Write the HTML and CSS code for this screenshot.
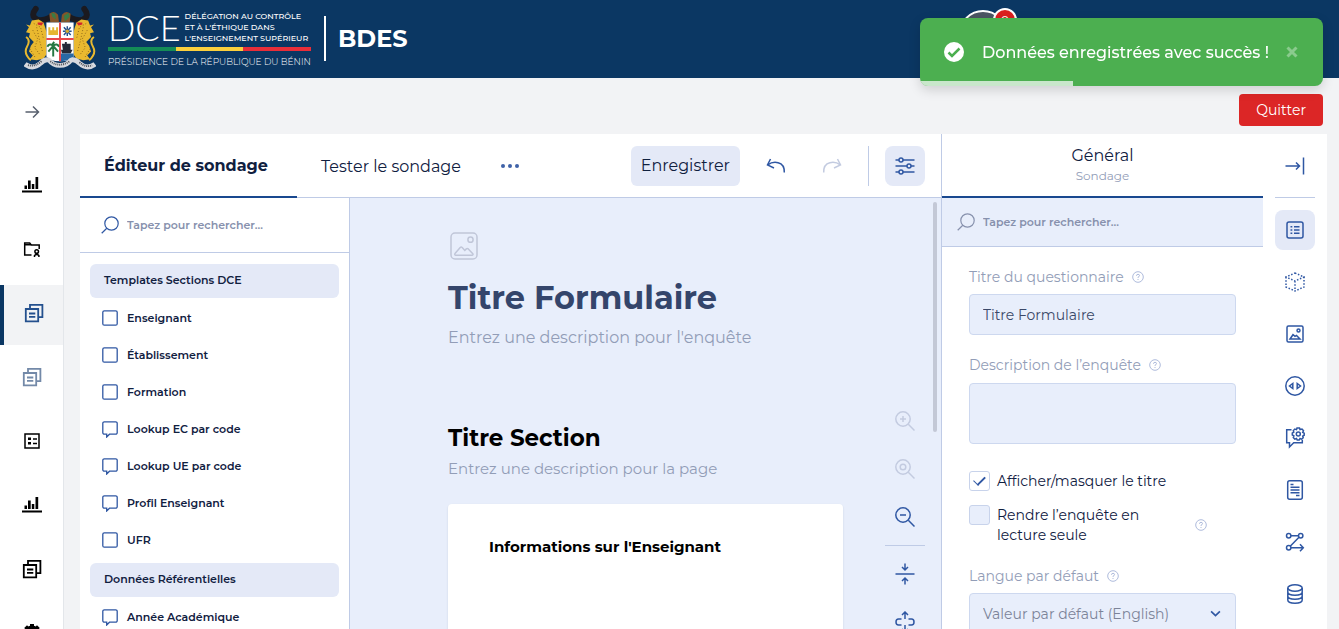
FILE: index.html
```
<!DOCTYPE html>
<html lang="fr">
<head>
<meta charset="UTF-8">
<meta name="viewport" content="width=device-width, initial-scale=1">
<title>BDES - Éditeur de sondage</title>
<link rel="stylesheet" href="styles.css">
</head>
<body>

<!-- Icons -->
<svg class="sprite" aria-hidden="true">
  <symbol id="i-search" viewBox="0 0 18 18"><circle cx="10.500" cy="7.500" r="6.700"/><path d="M5.800 12.300L.7 17.300"/></symbol>
  <symbol id="i-box" viewBox="0 0 16 17"><rect x=".8" y=".8" width="14.400" height="14.400" rx="1.500"/></symbol>
  <symbol id="i-bubble" viewBox="0 0 16 17"><path d="M2.300.8h11.400a1.500 1.500 0 0 1 1.500 1.500v9.400a1.500 1.500 0 0 1-1.500 1.500H7.500L4.700 16v-2.800H2.300A1.500 1.500 0 0 1 .8 11.700V2.300A1.500 1.500 0 0 1 2.300.8z"/></symbol>
  <symbol id="i-image" viewBox="0 0 28 28"><rect x="1" y="1" width="26" height="26" rx="4"/><circle cx="20.500" cy="7.700" r="2.600"/><path d="M5 21.500l5.200-6c.7-.7 1.300-.7 2 0l2.600 3 1.500-1.600c.7-.6 1.400-.6 2 0l4.500 4.800c.5.8.2 1.500-.8 1.500H5.800c-1 0-1.300-.8-.8-1.700z"/></symbol>
  <symbol id="i-image-sm" viewBox="0 0 20 20"><rect x="2" y="2" width="16" height="16" rx="1.500"/><circle cx="13.500" cy="6.500" r="1.500"/><path d="M5 15l3-4.300 2 1.700 1.500-1 3.500 3.600z"/></symbol>
  <symbol id="i-bars" viewBox="0 0 20 18"><path d="M0 14.500h20v2H0zM2.500 9.500h2.500v3.500H2.500zM6 4.500h2.700V13H6zM9.800 8h2.500v5H9.800zM13.500 1h2.700v12h-2.700z"/></symbol>
  <symbol id="i-docs" viewBox="0 0 20 20"><path d="M1.800 6h12.400v12.400H1.800z M6 5.500V1.800h12.400v12.400h-3.700 M5 10.500h6.300M5 13.900h6.300"/></symbol>
  <symbol id="i-folder" viewBox="0 0 18 18"><path d="M8.500 15H1.700V3h5l1.500 2h8v4M1.700 4.700h7"/><circle cx="13.700" cy="11.500" r="1.800"/><path d="M11.500 17v-1.500q2.200-2.200 4.400 0V17"/></symbol>
  <symbol id="i-form" viewBox="0 0 18 18"><path d="M2 2h14v14H2z"/><path d="M5 5.500h3v2.500H5zM5 10h3v2.500H5z" fill="currentColor" stroke="none"/><path d="M10 7h4M10 11.500h4"/></symbol>
  <symbol id="i-gear" viewBox="0 0 20 20"><circle cx="10" cy="10" r="5.500"/><path d="M10 1v18M1 10h18M3.600 3.600l12.800 12.800M16.400 3.600L3.600 16.400"/></symbol>
  <symbol id="i-arrow" viewBox="0 0 16 16"><path d="M1.500 8h13M9 2.500L14.500 8 9 13.500"/></symbol>
  <symbol id="i-undo" viewBox="0 0 20 16"><path d="M4.500 1L1.500 7l6.500 3M1.800 7c5-4 17-4.500 16.500 7.500"/></symbol>
  <symbol id="i-redo" viewBox="0 0 20 16"><path d="M15.500 1l3 6-6.500 3M18.200 7C13.200 3 1.200 2.500 1.700 14.500"/></symbol>
  <symbol id="i-sliders" viewBox="0 0 20 20"><path d="M.5 4h3.500M8 4h11.500M.5 10h11.500M16 10h3.500M.5 16h3.500M8 16h11.500"/><circle cx="6" cy="4" r="2"/><circle cx="14" cy="10" r="2"/><circle cx="6" cy="16" r="2"/></symbol>
  <symbol id="i-zoomin" viewBox="0 0 20 20"><circle cx="8" cy="8" r="7.200"/><path d="M13.300 13.300L19.500 19.500M8 5v6M5 8h6"/></symbol>
  <symbol id="i-zoom100" viewBox="0 0 20 20"><circle cx="8" cy="8" r="7.200"/><circle cx="8" cy="8" r="2.800"/><path d="M13.300 13.300L19.500 19.500"/></symbol>
  <symbol id="i-zoomout" viewBox="0 0 20 20"><circle cx="8" cy="8" r="7.200"/><path d="M13.300 13.300L19.500 19.500M5 8h6"/></symbol>
  <symbol id="i-collapse" viewBox="0 0 20 22"><path d="M.5 11h19M10 .5v6M7 4l3 3 3-3M10 21.500v-6M7 18l3-3 3 3"/></symbol>
  <symbol id="i-expand" viewBox="0 0 20 22"><path d="M10 8V1M7 4l3-3 3 3M10 14v7M7 18l3 3 3-3M6.500 8H3.500Q1 8 1 11t2.500 3h3M13.500 8h3Q19 8 19 11t-2.500 3h-3"/></symbol>
  <symbol id="i-tobar" viewBox="0 0 20 20"><path d="M.5 10h14M11 6.500l3.500 3.500L11 13.500M18.500 1.500v17"/></symbol>
  <symbol id="i-list" viewBox="0 0 20 20"><rect x="2" y="2" width="16" height="16" rx="2"/><path d="M5.500 6.800h1.800M9 6.800h5.500M5.500 10h1.800M9 10h5.500M5.500 13.200h1.800M9 13.200h5.500"/></symbol>
  <symbol id="i-cube" viewBox="0 0 20 20"><path d="M10 1l9 4-9 4-9-4zM1 5v10l9 4 9-4V5M10 9v10" stroke-dasharray="1.500 1.700"/></symbol>
  <symbol id="i-code" viewBox="0 0 20 20"><circle cx="10" cy="10" r="9.200"/><path d="M7.800 7.500v5L4.500 10zM12.200 7.500v5l3.300-2.500z"/></symbol>
  <symbol id="i-bubblegear" viewBox="0 0 20 22"><path d="M6.500 2.800H1.700v13h2.800V20l4.200-4.200h8.600v-3"/><circle cx="13.300" cy="7" r="2"/><path d="M12 1h2.500l.5 1.500 2-.5 1.500 1.700-.8 1.700 1.500.8v2l-1.500.8.5 1.700-1.700 1.500-1.500-.7-.8 1.500h-2l-.7-1.500-1.700.7-1.500-1.700.6-1.600L7.300 8V6l1.500-.8-.5-1.600L9.800 2l1.700.6z"/></symbol>
  <symbol id="i-page" viewBox="0 0 20 20"><rect x="2.700" y=".8" width="14.600" height="18.400" rx="2"/><path d="M5.500 4.500h3M5.500 7.300h9M5.500 10h9M5.500 12.800h9M11 15.600h3.500"/></symbol>
  <symbol id="i-logic" viewBox="0 0 20 20"><circle cx="3.700" cy="3.700" r="2.200"/><circle cx="15.700" cy="3.700" r="2.200"/><circle cx="3.700" cy="15.700" r="2.200"/><path d="M6 3.700h7.500M14 5.300L5.200 14.200M6 15.700h12M15 12.200l3.300 3.500-3.300 3.500"/></symbol>
  <symbol id="i-db" viewBox="0 0 20 20"><ellipse cx="10" cy="4" rx="7.200" ry="3.200"/><path d="M2.800 4v12c0 4.300 14.400 4.300 14.400 0V4M2.800 8c0 4.300 14.400 4.300 14.400 0M2.800 12c0 4.300 14.400 4.300 14.400 0"/></symbol>
  <symbol id="i-help" viewBox="0 0 12 12"><circle cx="6" cy="6" r="5.300"/><path d="M4.500 4.800Q4.500 3.300 6 3.300t1.500 1.300Q7.500 5.500 6 6.300V7M6 8v1"/></symbol>
  <symbol id="i-chevron" viewBox="0 0 10 10"><path d="M1 3l4 4 4-4"/></symbol>
</svg>

<header class="topbar">
  <a class="brand" href="#">
    <svg class="emblem" viewBox="0 0 74 68" aria-label="Armoiries du Bénin">
      <!-- horns -->
      <path fill="none" stroke="#1b1a20" stroke-width="6" stroke-linecap="round" d="M12 4C5 13 14 17 21 15q5-1 8-4M62 4c7 9-2 13-9 11q-5-1-8-4"/>
      <path fill="#85552a" d="M26 9q5-4 9 1l1 8H27zM39 10q4-5 9-1l-1 9h-9z"/>
      <path fill="#3a7b45" d="M28 8l4 1 1 6-4-3zM41 11l5-3 1 4-5 5z"/>
      <!-- leopards -->
      <g id="leopard">
        <path fill="#e9b92f" d="M8 16l7-1 5 3 2 6 1 4v23l-3 4-7 2-7-1 3-4-4-4 2-6 3-4-5-5 1-4-4-1 3-5-3-3 4 1z"/>
        <path fill="none" stroke="#e9b92f" stroke-width="2" d="M7 57Q-1 50 3 43T2 33"/>
        <path fill="none" stroke="#8b6417" stroke-width="1" stroke-dasharray="1 2" d="M10 19l7 4 3 12M9 26l5 9-3 9 6 8M13 23l3 14 3 11M6 45l6 10"/>
        <path fill="#d3242d" d="M14 18h6l-2 3-4-1z"/>
      </g>
      <use href="#leopard" transform="matrix(-1 0 0 1 74 0)"/>
      <!-- shield -->
      <path fill="#fff" d="M23 18h28v35q-4 5-14 5t-14-5z"/>
      <path fill="#e5b632" d="M25 23h2v3h2v-3h2v3h2v-3h2v8H25z"/>
      <path fill="none" stroke="#24508e" stroke-width="1.500" d="M40 27h9M44.500 22v10M41 23l7 8M48 23l-7 8"/>
      <circle cx="44.500" cy="27" r="1.800" fill="#d5aa32"/>
      <path fill="none" stroke="#257843" stroke-width="2" d="M30 53V42q-4-3-6 1M30 42q4-3 6 1M30 42l-5 6M30 42l5 6M29 41l2-3"/>
      <path fill="#242a38" d="M39 40h3v-2h2v2h4v6h2l-2 4h-9l-1-4h2z"/>
      <path fill="#2869a5" d="M38 50h13v3q-4 4-13 5z"/>
      <path stroke="#e8474b" stroke-width="2" d="M37 18v40M23 35h28"/>
      <!-- motto ribbon -->
      <path fill="none" stroke="#d7d9de" stroke-width="5" d="M1 61q8 6 16-1 5-5 9-3c5 7 17 7 22 0q4-2 9 3 8 7 16 1"/>
      <path fill="none" stroke="#4c5057" stroke-width="2" stroke-dasharray="1 1" d="M4 62q7 2 14-4M27 58q9 7 20 0M57 59q7 6 13 3"/>
    </svg>
    <span class="logo">
      <span class="logo-top">
        <span class="dce">DCE</span>
        <span class="logo-lines">DÉLÉGATION AU CONTRÔLE<br>ET À L'ÉTHIQUE DANS<br>L'ENSEIGNEMENT SUPÉRIEUR</span>
      </span>
      <span class="flag"><i class="green"></i><i class="yellow"></i><i class="red"></i></span>
      <span class="logo-bottom">PRÉSIDENCE DE LA RÉPUBLIQUE DU BÉNIN</span>
    </span>
    <span class="app-name">BDES</span>
  </a>
  <button class="avatar" aria-label="Mon compte"><span class="badge">0</span></button>
</header>

<div class="shell">
  <nav class="sidebar">
    <button class="side-toggle" aria-label="Déplier le menu"><svg class="stroke"><use href="#i-arrow"/></svg></button>
    <a class="side-link" href="#" aria-label="Tableau de bord"><svg class="fill"><use href="#i-bars"/></svg></a>
    <a class="side-link" href="#" aria-label="Dossiers"><svg class="stroke thin"><use href="#i-folder"/></svg></a>
    <a class="side-link active" href="#" aria-label="Formulaires"><svg class="stroke"><use href="#i-docs"/></svg></a>
    <a class="side-link muted" href="#" aria-label="Modèles"><svg class="stroke"><use href="#i-docs"/></svg></a>
    <a class="side-link" href="#" aria-label="Listes"><svg class="stroke thin"><use href="#i-form"/></svg></a>
    <a class="side-link" href="#" aria-label="Statistiques"><svg class="fill"><use href="#i-bars"/></svg></a>
    <a class="side-link" href="#" aria-label="Documents"><svg class="stroke"><use href="#i-docs"/></svg></a>
    <a class="side-link" href="#" aria-label="Paramètres"><svg class="stroke gear"><use href="#i-gear"/></svg></a>
  </nav>

  <main class="main">
    <div class="page-actions"><button class="quit">Quitter</button></div>

    <div class="creator">
      <section class="editor">
        <div class="tabs">
          <button class="tab active">Éditeur de sondage</button>
          <button class="tab">Tester le sondage</button>
          <button class="dots" aria-label="Plus"><i></i><i></i><i></i></button>
          <div class="toolbar">
            <button class="save">Enregistrer</button>
            <button class="tool" aria-label="Annuler"><svg class="stroke"><use href="#i-undo"/></svg></button>
            <button class="tool off" aria-label="Rétablir" disabled><svg class="stroke"><use href="#i-redo"/></svg></button>
            <span class="split"></span>
            <button class="tool on" aria-label="Paramètres"><svg class="stroke"><use href="#i-sliders"/></svg></button>
          </div>
        </div>

        <div class="workspace">
          <!-- Toolbox -->
          <aside class="toolbox">
            <label class="search"><svg class="stroke"><use href="#i-search"/></svg><input type="text" placeholder="Tapez pour rechercher..." aria-label="Rechercher un élément"></label>
            <div class="tools">
              <h2 class="group">Templates Sections DCE</h2>
              <button class="item"><svg class="stroke"><use href="#i-box"/></svg>Enseignant</button>
              <button class="item"><svg class="stroke"><use href="#i-box"/></svg>Établissement</button>
              <button class="item"><svg class="stroke"><use href="#i-box"/></svg>Formation</button>
              <button class="item"><svg class="stroke"><use href="#i-bubble"/></svg>Lookup EC par code</button>
              <button class="item"><svg class="stroke"><use href="#i-bubble"/></svg>Lookup UE par code</button>
              <button class="item"><svg class="stroke"><use href="#i-bubble"/></svg>Profil Enseignant</button>
              <button class="item"><svg class="stroke"><use href="#i-box"/></svg>UFR</button>
              <h2 class="group">Données Référentielles</h2>
              <button class="item"><svg class="stroke"><use href="#i-bubble"/></svg>Année Académique</button>
            </div>
          </aside>

          <!-- Design surface -->
          <div class="canvas">
            <div class="form">
              <button class="logo-slot" aria-label="Ajouter un logo"><svg class="stroke"><use href="#i-image"/></svg></button>
              <h1>Titre Formulaire</h1>
              <p class="hint">Entrez une description pour l'enquête</p>
              <h2>Titre Section</h2>
              <p class="hint page-hint">Entrez une description pour la page</p>
              <div class="card"><h3>Informations sur l'Enseignant</h3></div>
            </div>
            <div class="zoom">
              <button class="tool off" aria-label="Zoom avant"><svg class="stroke"><use href="#i-zoomin"/></svg></button>
              <button class="tool off" aria-label="Zoom 100%"><svg class="stroke"><use href="#i-zoom100"/></svg></button>
              <button class="tool" aria-label="Zoom arrière"><svg class="stroke"><use href="#i-zoomout"/></svg></button>
              <span class="rule"></span>
              <button class="tool" aria-label="Tout réduire"><svg class="stroke"><use href="#i-collapse"/></svg></button>
              <button class="tool" aria-label="Tout déplier"><svg class="stroke"><use href="#i-expand"/></svg></button>
            </div>
            <span class="scrollbar"></span>
          </div>
        </div>
      </section>

      <!-- Properties -->
      <section class="props">
        <div class="props-head"><strong>Général</strong><small>Sondage</small></div>
        <label class="search"><svg class="stroke"><use href="#i-search"/></svg><input type="text" placeholder="Tapez pour rechercher..." aria-label="Rechercher une propriété"></label>
        <form class="fields">
          <label class="caption" for="titre">Titre du questionnaire <svg class="stroke help"><use href="#i-help"/></svg></label>
          <input class="field" id="titre" type="text" value="Titre Formulaire">
          <label class="caption" for="desc">Description de l’enquête <svg class="stroke help"><use href="#i-help"/></svg></label>
          <textarea class="field" id="desc"></textarea>
          <div class="checks">
            <label class="check"><input type="checkbox" checked><span>Afficher/masquer le titre</span></label>
            <label class="check"><input type="checkbox"><span>Rendre l’enquête en lecture seule</span><svg class="stroke help"><use href="#i-help"/></svg></label>
          </div>
          <label class="caption" for="langue">Langue par défaut <svg class="stroke help"><use href="#i-help"/></svg></label>
          <div class="select"><select class="field" id="langue"><option>Valeur par défaut (English)</option></select><svg class="stroke"><use href="#i-chevron"/></svg></div>
        </form>
      </section>

      <nav class="rail">
        <button class="tool" aria-label="Replier"><svg class="stroke"><use href="#i-tobar"/></svg></button>
        <span class="rule"></span>
        <button class="tool on" aria-label="Général"><svg class="stroke"><use href="#i-list"/></svg></button>
        <button class="tool" aria-label="Disposition"><svg class="stroke"><use href="#i-cube"/></svg></button>
        <button class="tool" aria-label="Logo"><svg class="stroke"><use href="#i-image-sm"/></svg></button>
        <button class="tool" aria-label="Navigation"><svg class="stroke"><use href="#i-code"/></svg></button>
        <button class="tool" aria-label="Question"><svg class="stroke tall"><use href="#i-bubblegear"/></svg></button>
        <button class="tool" aria-label="Pages"><svg class="stroke"><use href="#i-page"/></svg></button>
        <button class="tool" aria-label="Conditions"><svg class="stroke"><use href="#i-logic"/></svg></button>
        <button class="tool" aria-label="Données"><svg class="stroke"><use href="#i-db"/></svg></button>
      </nav>
    </div>
  </main>
</div>

<div class="toast" role="status">
  <svg class="toast-icon" viewBox="0 0 20 20"><circle cx="10" cy="10" r="10" fill="#fff"/><path d="M4.500 10.500l3.500 3.500 7.500-7.500" fill="none" stroke="#4caf50" stroke-width="2.500"/></svg>
  <span>Données enregistrées avec succès !</span>
  <button class="toast-close" aria-label="Fermer"><svg viewBox="0 0 12 12"><path d="M1.500 1.500l9 9M10.500 1.500l-9 9"/></svg></button>
  <i class="progress"></i>
</div>

</body>
</html>
```
FILE: styles.css
```
*{box-sizing:border-box;margin:0;padding:0}
body{font-family:Montserrat,Inter,sans-serif;height:100vh;display:flex;flex-direction:column;overflow:hidden;background:#f2f3f5;color:#10203f;font-size:16px}
button,input,textarea,select{font:inherit;color:inherit;border:0;background:none}
button{cursor:pointer}
a{color:inherit;text-decoration:none}
svg{flex:none}
.sprite{position:absolute;width:0;height:0}
.stroke{width:20px;height:20px;fill:none;stroke:currentColor;stroke-width:1.5}
.fill{width:20px;height:18px;fill:currentColor}

/* top bar */
.topbar{height:78px;flex:none;background:#0b3763;color:#fff;display:flex;justify-content:space-between;padding:0 332px 0 24px}
.brand{display:flex;align-items:center;padding-bottom:2px}
.emblem{width:72px;height:66px;margin-right:12px}
.logo{width:203px;display:flex;flex-direction:column;margin-top:2px}
.logo-top{display:flex;gap:4px;align-items:center;height:35px;white-space:nowrap}
.dce{font-family:Lato,sans-serif;font-weight:300;font-size:36px;line-height:35px}
.logo-lines{font-size:8px;font-weight:500;line-height:11px}
.flag{display:flex;height:4px;margin:2px 0 4px}
.flag i{flex:1}
.green{background:#148c57}
.yellow{background:#fbcf3d}
.red{background:#e92e39}
.logo-bottom{font-size:9px;line-height:14px;font-weight:300;white-space:nowrap}
.app-name{margin-left:13px;padding-left:12px;border-left:2px solid #fff;font-size:24px;font-weight:700;line-height:45px}
.avatar{position:relative;width:48px;height:48px;margin-top:10px;border:2px solid #fff;border-radius:50%;background:#4b5563}
.badge{position:absolute;top:-4px;right:-12px;width:24px;height:24px;border:2px solid #fff;border-radius:50%;background:#dc1f1f;color:#fff;font-size:12px;line-height:20px}

/* sidebar */
.shell{flex:1;display:flex;min-height:0}
.sidebar{width:64px;flex:none;display:flex;flex-direction:column;gap:4px;background:#fff;border-right:1px solid #e3e6ea;color:#000;overflow:hidden}
.side-toggle{height:68px;margin-bottom:7px;padding-top:4px;color:#58606e;flex:none}
.side-toggle svg{width:16px;height:16px}
.side-link{height:60px;flex:none;display:flex;align-items:center;justify-content:center;padding-bottom:4px;border-left:4px solid transparent}
.side-link svg{margin-right:4px;stroke-width:1.8}
.side-link.active{background:#f2f3f5;border-left-color:#0b3763;color:#24508e}
.side-link.active svg{margin-right:0}
.side-link.muted{color:#7389a8}
.side-link .fill{stroke-width:0}
.side-link .thin{width:18px;height:18px;stroke-width:1.5}
.side-link .gear{stroke-width:4}

/* main */
.main{flex:1;min-width:0;display:flex;flex-direction:column;padding:16px 12px 0 16px}
.page-actions{display:flex;justify-content:flex-end;padding:0 4px 8px}
.quit{height:32px;padding:0 17px;border-radius:4px;background:#dc2626;color:#fff;font-size:14px}
.creator{flex:1;min-height:0;display:flex;background:#fff}
.editor{flex:1;min-width:0;display:flex;flex-direction:column;border-right:1px solid #bfcbe6}

/* tabs and toolbar */
.tabs{display:flex;height:64px;flex:none;border-bottom:1px solid #bfcbe6}
.tab{padding:0 24px;height:64px;white-space:nowrap;text-align:left}
.tab.active{min-width:217px;font-weight:700;border-bottom:2px solid #19488f}
.dots{display:flex;align-items:center;gap:3px;padding:0 16px}
.dots i{width:4px;height:4px;border-radius:50%;background:#3f62a8}
.toolbar{margin-left:auto;display:flex;align-items:center;gap:16px;padding-right:16px}
.save{height:40px;padding:0 10px;border-radius:6px;background:#e4e9f7}
.tool{width:40px;height:40px;flex:none;display:flex;align-items:center;justify-content:center;border-radius:8px;color:#2f57a3}
.tool.on{background:#e4e9f7}
.tool.off{color:#c3cbe0}
.split{width:1px;height:40px;background:#bfcbe6}
.rule{width:40px;height:1px;flex:none;background:#bfcbe6}

/* toolbox */
.workspace{flex:1;min-height:0;display:flex}
.toolbox{width:270px;flex:none;border-right:1px solid #bfcbe6;overflow:hidden}
.search{display:flex;align-items:center;gap:8px;height:55px;padding:0 21px;border-bottom:1px solid #bfcbe6;color:#2f57a3}
.search svg{width:18px;height:18px;stroke-width:1.2}
.search input{flex:1;min-width:0;font-size:11px;font-weight:600;outline:0}
.search input::placeholder{color:#8791ad;opacity:1}
.tools{display:flex;flex-direction:column;gap:3px;padding:11px 10px}
.group,.item{height:34px;flex:none;font-size:11px;font-weight:600;text-align:left}
.group{line-height:33px;padding:0 14px;border-radius:6px;background:#e4e9f7}
.item + .group{margin-top:3px}
.item{display:flex;align-items:center;gap:9px;padding:0 12px}
.item svg{width:16px;height:17px;color:#2f57a3;stroke-width:1.3}

/* canvas */
.canvas{flex:1;position:relative;min-width:0;display:flex;justify-content:space-between;background:#e8eefb;overflow:hidden;padding:0 16px 0 98px}
.form{flex:1;max-width:395px;padding-top:34px}
.logo-slot{display:block;height:28px;margin-left:2px;color:#c0c6d8}
.logo-slot svg{width:28px;height:28px}
.form h1{font-size:32px;line-height:40px;margin-top:18px;color:#34456b}
.hint{line-height:20px;margin-top:10px;color:#929db7}
.form h2{font-size:23px;line-height:28px;margin-top:76px;color:#000}
.page-hint{margin-top:7px;font-size:15px}
.card{height:200px;margin-top:25px;padding:32px 41px;background:#fff;border-radius:4px;box-shadow:0 1px 2px rgba(40,60,100,.15)}
.card h3{font-size:15px;line-height:22px;color:#000}
.zoom{display:flex;flex-direction:column;gap:8px;padding-top:203px}
.zoom svg{height:22px}
.scrollbar{position:absolute;top:4px;right:4px;width:4px;height:230px;border-radius:2px;background:#c3c8d6}

/* properties */
.props{width:321px;flex:none;display:flex;flex-direction:column;overflow:hidden}
.props-head{height:64px;flex:none;display:flex;flex-direction:column;align-items:center;padding-top:11px;border-bottom:2px solid #19488f}
.props-head strong{font-weight:400;line-height:21px}
.props-head small{font-size:12px;line-height:20px;color:#929db7}
.props .search{height:49px;flex:none;padding:0 15px;color:#8791ad;background:#e8eefb}
.fields{display:flex;flex-direction:column;padding:20px 27px;font-size:14px}
.caption{display:flex;align-items:center;gap:8px;height:20px;color:#929db7}
.help{width:12px;height:12px;color:#aebbdc;stroke-width:1}
.field{width:100%;height:41px;flex:none;margin:7px 0 20px;padding:0 13px;border:1px solid #cdd8ef;border-radius:4px;background:#e8eefb;color:#3a4868}
textarea.field{height:61px;margin:8px 0 27px;resize:none}
.checks{display:flex;flex-direction:column;gap:14px;margin-bottom:21px}
.check{display:flex;align-items:flex-start;gap:7px;line-height:20px}
.check span{flex:1}
.check input{appearance:none;width:21px;height:20px;flex:none;display:grid;place-items:center;border:1px solid #c8d3eb;border-radius:3px;background:#e8eefb}
.check input:checked{background:#fff}
.check input:checked::before{content:'';width:10px;height:5px;margin-bottom:3px;border-left:1px solid #2f57a3;border-bottom:2px solid #2f57a3;transform:rotate(-45deg)}
.check .help{align-self:center;margin-right:29px}
.check:last-child span{max-width:160px;margin-right:auto}
.select{position:relative}
.select .field{appearance:none;color:#7c8499}
.select svg{position:absolute;right:15px;top:22px;width:11px;height:11px;color:#2f57a3}

/* rail */
.rail{width:64px;flex:none;display:flex;flex-direction:column;align-items:center;gap:12px;padding-top:12px;overflow:hidden}
.rail .rule{margin-top:-1px}
.rail .tall{height:22px}

/* toast */
.toast{position:fixed;top:18px;right:16px;display:flex;align-items:center;height:68px;width:403px;padding:0 25px 0 24px;border-radius:8px;background:#4caf50;color:#fff;font-weight:500;overflow:hidden;box-shadow:0 4px 12px rgba(0,0,0,.15)}
.toast-icon{width:20px;height:20px;margin-right:18px}
.toast-close{margin-left:auto;opacity:.35}
.toast-close svg{display:block;width:12px;height:12px;stroke:#fff;stroke-width:3}
.progress{position:absolute;left:0;bottom:0;width:38%;height:5px;background:rgba(255,255,255,.7)}
```
